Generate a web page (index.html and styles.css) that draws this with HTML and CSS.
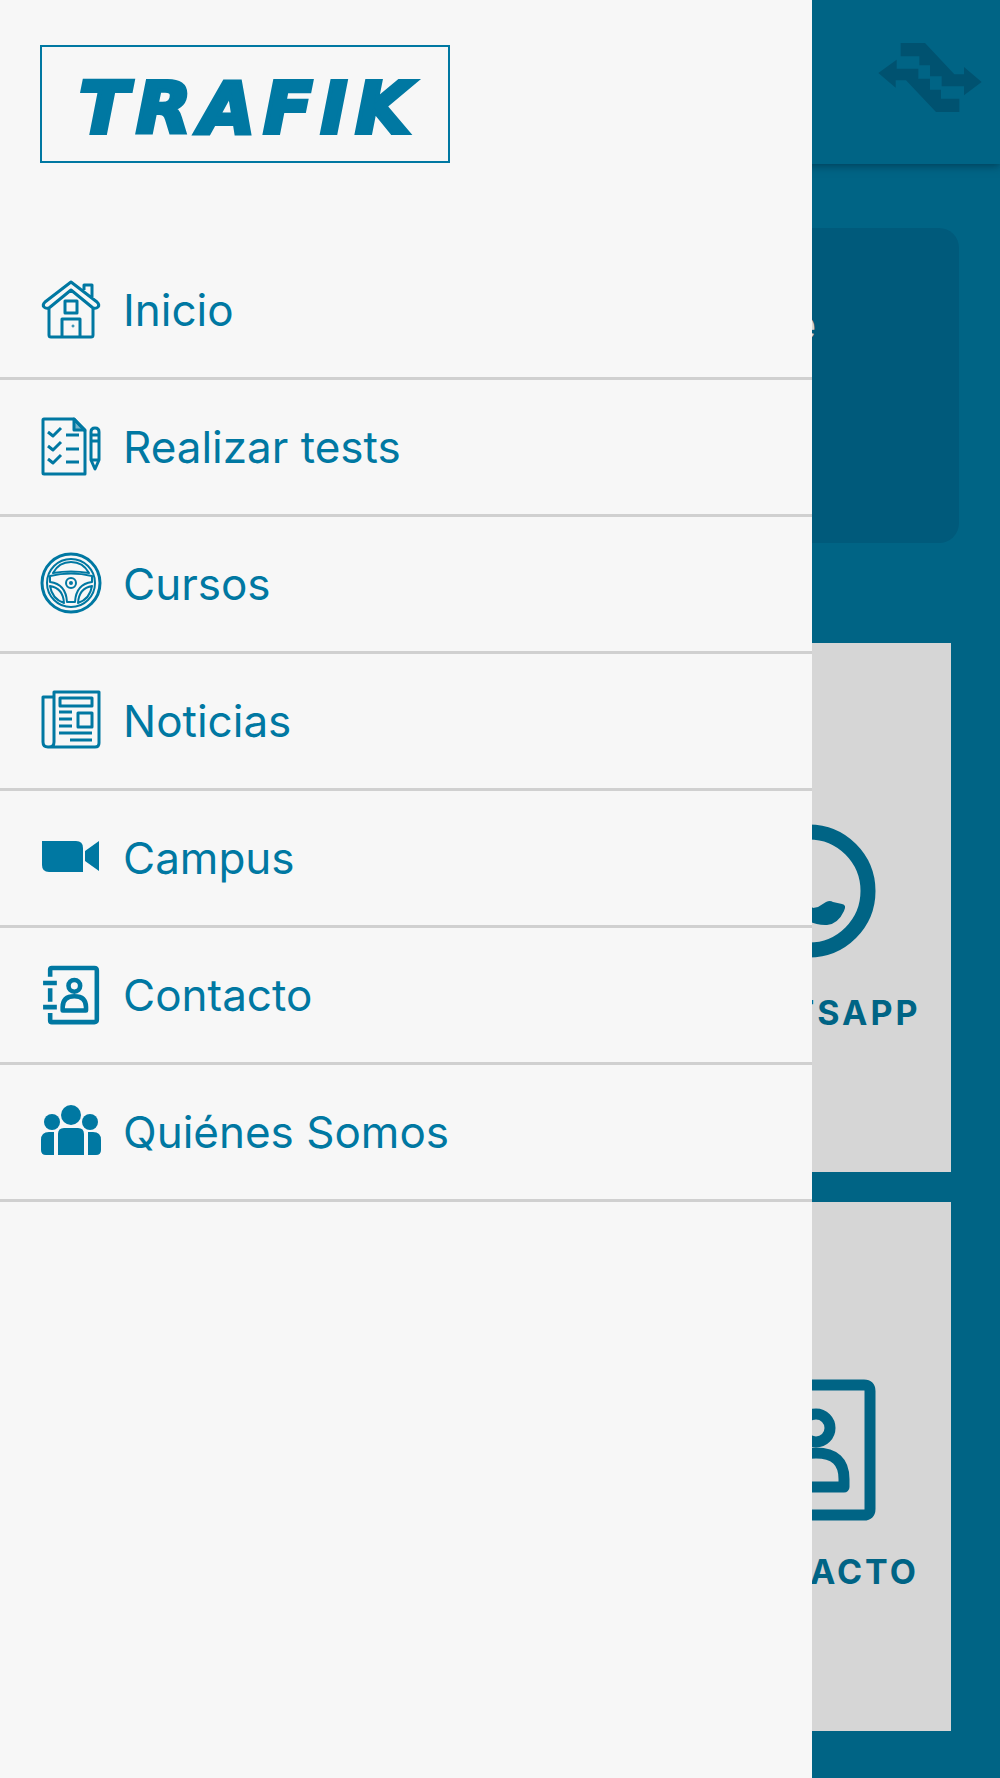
FILE: index.html
```
<!DOCTYPE html>
<html lang="es">
<head>
    <meta charset="UTF-8">
    <meta name="viewport" content="width=device-width, initial-scale=1.0">
    <title>Trafik</title>
    <link rel="stylesheet" href="styles.css">
</head>
<body>
    <!-- Shared icons -->
    <svg class="sprite" aria-hidden="true">
        <symbol id="icon-contact" viewBox="0 0 144 144">
            <g fill="none" stroke="currentColor" stroke-width="11">
                <path d="M22 28V11q0-4 4-4h102q6 0 6 6v118q0 6-6 6H26q-4 0-4-4v-18M22 56v32M5 43h33M5 101h33"/>
                <circle cx="80" cy="50" r="14"/>
                <path d="M52 109v-8q0-26 28-26t28 26v8z" stroke-linejoin="round"/>
            </g>
        </symbol>
    </svg>

    <!-- Header -->
    <header class="topbar">
        <svg class="topbar-logo" viewBox="235 128 310 207" aria-hidden="true">
            <path d="M302 128H375L463 222H492V200L545 245L492 285V258H425V228H390V195H358V168H302Z"/>
            <path d="M478 335H408L318 240H287V262L235 218L290 178V205H355V235H390V268H423V295H478Z"/>
        </svg>
    </header>

    <!-- Home content -->
    <main>
        <section class="welcome">
            <p>e</p>
        </section>
        <section class="tiles">
            <a href="#" class="tile">
                <svg viewBox="0 0 144 144" aria-hidden="true">
                    <circle cx="73" cy="72" r="59" fill="none" stroke="currentColor" stroke-width="15"/>
                    <path d="M8 138l10-38 26 28z" fill="currentColor"/>
                    <path d="M46 40q6-6 10 0l6 13q1 4-5 10 8 16 20 26l5-1 8-5q4-2 7 0l9 2q5 1 2 7-6 13-17 14-18 1-35-17-22-22-20-36 2-8 10-13z" fill="currentColor"/>
                </svg>
                <span>WHATSAPP</span>
            </a>
            <a href="#" class="tile">
                <svg aria-hidden="true"><use href="#icon-contact"/></svg>
                <span>CONTACTO</span>
            </a>
        </section>
    </main>

    <!-- Side menu -->
    <aside class="drawer">
        <h1 class="brand">TRAFIK</h1>
        <nav>
            <ul class="menu">
                <li><a href="#">
                    <svg viewBox="0 0 60 60" class="line" aria-hidden="true">
                        <path d="M30 2L4 22q-3 3-1 5t5 1L30 10l22 18q3 1 5-1t-1-5zM43 10V5h8v13M8 28v27q0 2 2 2h40q2 0 2-2V28M21 57V39h18v18M24 21h12v12H24z"/>
                        <circle cx="32" cy="46" r="1" stroke-width="1"/>
                    </svg>
                    <span>Inicio</span>
                </a></li>
                <li><a href="#">
                    <svg viewBox="0 0 60 60" class="line" aria-hidden="true">
                        <path d="M3 2h30l11 12v43H3q-1 0-1-1V3q0-1 1-1z"/>
                        <path d="M33 2v11h11z" fill="currentColor" fill-opacity="0.5"/>
                        <path d="M7 15l5 4 8-8M7 29l5 4 8-8M7 42l5 4 8-8M25 18h13M25 32h13M25 45h13"/>
                        <path d="M50 43V15q0-4 4-4t4 4v28l-4 9zM50 18h8M50 24h8M50 43h8"/>
                    </svg>
                    <span>Realizar tests</span>
                </a></li>
                <li><a href="#">
                    <svg viewBox="0 0 60 60" class="line thin" aria-hidden="true">
                        <circle cx="30" cy="29" r="29" stroke-width="3"/>
                        <circle cx="30" cy="29" r="24"/>
                        <path d="M12 19Q18 8 30 8t18 11q-18-3-36 0zM9 22q21-5 42 0v6q-16 2-17 20h-8Q25 30 9 28zM9 32q13 2 14 17Q11 45 9 32zM51 32q-13 2-14 17 12-4 14-17z"/>
                        <circle cx="30" cy="29" r="5"/>
                        <circle cx="30" cy="29" r="1"/>
                    </svg>
                    <span>Cursos</span>
                </a></li>
                <li><a href="#">
                    <svg viewBox="0 0 60 60" class="line" aria-hidden="true">
                        <path d="M13 1h45v51q0 4-4 4H7q-5 0-5-5V6h11zM13 6v45q0 5-5 5M19 7h32v8H19zM37 22h14v14H37zM18 21h13M18 28h13M18 35h13M18 42h33M29 49h22"/>
                    </svg>
                    <span>Noticias</span>
                </a></li>
                <li><a href="#">
                    <svg viewBox="0 0 60 60" class="solid" aria-hidden="true">
                        <path d="M1 13h34q7 0 7 7v24H8q-7 0-7-7zM44 23l14-10v30l-14-10z"/>
                    </svg>
                    <span>Campus</span>
                </a></li>
                <li><a href="#">
                    <svg aria-hidden="true"><use href="#icon-contact"/></svg>
                    <span>Contacto</span>
                </a></li>
                <li><a href="#">
                    <svg viewBox="0 0 60 60" class="solid" aria-hidden="true">
                        <circle cx="30" cy="13" r="10"/>
                        <circle cx="11" cy="20" r="8"/>
                        <circle cx="49" cy="20" r="8"/>
                        <path d="M17 53V32q0-6 6-6h14q6 0 6 6v21zM13 30v23H5q-5 0-5-5V38q0-8 8-8zM47 30v23h8q5 0 5-5V38q0-8-8-8z"/>
                    </svg>
                    <span>Quiénes Somos</span>
                </a></li>
            </ul>
        </nav>
    </aside>
</body>
</html>
```
FILE: styles.css
```
* {
    box-sizing: border-box;
}
body {
    margin: 0;
    min-height: 100vh;
    position: relative;
    overflow-x: hidden;
    font-family: Inter, "Liberation Sans", sans-serif;
    background-color: #006485;
}
a {
    color: inherit;
    text-decoration: none;
}
.sprite {
    position: absolute;
    width: 0;
    height: 0;
}

/* Header */
.topbar {
    display: flex;
    justify-content: flex-end;
    height: 164px;
    padding: 43px 18px 0;
    box-shadow: 0 2px 8px rgba(0, 40, 60, 0.6);
}
.topbar-logo {
    width: 104px;
    height: 69px;
    fill: #005270;
}

/* Home content */
.welcome {
    min-height: 315px;
    margin: 64px 41px 100px;
    padding: 68px 143px 0;
    border-radius: 20px;
    background-color: #005a7b;
    color: #d6d6d6;
    text-align: right;
}
.welcome p {
    margin: 0;
    font-size: 44px;
    font-weight: 600;
    line-height: 56px;
}
.tiles {
    display: flex;
    flex-direction: column;
    align-items: flex-end;
    gap: 30px;
    padding: 0 49px 46px;
}
.tile {
    display: flex;
    flex-direction: column;
    align-items: center;
    gap: 30px;
    width: 286px;
    padding: 176px 0 139px;
    background-color: #d6d6d6;
    color: #006485;
    font-size: 34px;
    font-weight: 700;
    line-height: 40px;
    letter-spacing: 3px;
}
.tile span {
    padding-left: 4px;
}
.tile svg {
    width: 144px;
    height: 144px;
}

/* Side menu */
.drawer {
    position: absolute;
    top: 0;
    left: 0;
    bottom: 0;
    width: 81.2%;
    padding-top: 45px;
    background-color: #f7f7f7;
    color: #0078a2;
}
.brand {
    width: 410px;
    margin: 0 40px 80px;
    padding: 8px 0 0 8px;
    border: 2px solid #0078a2;
    font-family: "DejaVu Sans", sans-serif;
    font-size: 72px;
    font-style: italic;
    font-weight: 700;
    line-height: 106px;
    letter-spacing: 8px;
    text-align: center;
    -webkit-text-stroke: 4px #0078a2;
}
.menu {
    list-style: none;
    margin: 0;
    padding: 0;
}
.menu li {
    border-bottom: 3px solid #d0d0d0;
}
.menu a {
    display: flex;
    align-items: center;
    gap: 22px;
    height: 134px;
    padding: 0 41px;
    font-size: 44px;
    line-height: 56px;
}
.menu svg {
    width: 60px;
    height: 60px;
    overflow: visible;
}
.line {
    fill: none;
    stroke: currentColor;
    stroke-width: 3;
    stroke-linejoin: round;
}
.thin {
    stroke-width: 2;
}
.solid {
    fill: currentColor;
}
```
